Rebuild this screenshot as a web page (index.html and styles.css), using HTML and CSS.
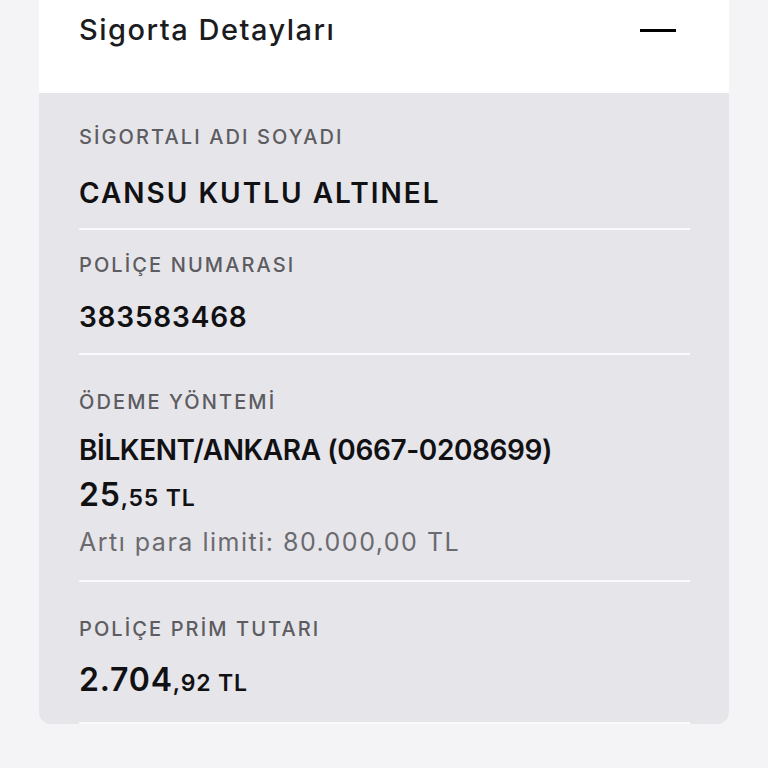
FILE: index.html
```html
<!DOCTYPE HTML>
<html lang="tr">
  <head>
    <title>Sigorta Detayları</title>
    <meta charset="utf-8" />
    <link rel="stylesheet" href="styles.css">
  </head>
  <body>
    <div class="card">
      <div class="card-head">
        <h2 class="card-title">Sigorta Detayları</h2>
        <span class="toggle"></span>
      </div>
      <div class="card-body">
        <div class="row first">
          <div class="label">SİGORTALI ADI SOYADI</div>
          <div class="value wide">CANSU KUTLU ALTINEL</div>
        </div>
        <div class="row second">
          <div class="label">POLİÇE NUMARASI</div>
          <div class="value">383583468</div>
        </div>
        <div class="row">
          <div class="label">ÖDEME YÖNTEMİ</div>
          <div class="value narrow">BİLKENT/ANKARA (0667-0208699)</div>
          <div class="amount">25<small>,55 TL</small></div>
          <div class="note">Artı para limiti: 80.000,00 TL</div>
        </div>
        <div class="row last">
          <div class="label">POLİÇE PRİM TUTARI</div>
          <div class="amount">2.704<small>,92 TL</small></div>
        </div>
      </div>
    </div>
  </body>
</html>
```

FILE: styles.css
```css
*{
  margin:0;
  padding:0;
  box-sizing:border-box;
}
body{
  background:#f4f4f6;
  font-family:Inter, "Noto Sans", sans-serif;
  color:#111113;
}
.card{
  width:690px;
  margin-left:39px;
}
.card-head{
  height:93px;
  background:#fff;
  display:flex;
  justify-content:space-between;
  padding:13px 53px 0 40px;
}
.card-title{
  font-size:29px;
  font-weight:500;
  line-height:34px;
  letter-spacing:1.5px;
  color:#1c1c1f;
}
.toggle{
  width:36px;
  height:3px;
  margin-top:16px;
  background:#000;
}
.card-body{
  background:#e6e5ea;
  border-radius:0 0 12px 12px;
  padding:0 39px 0 40px;
}
.row{
  padding:35px 0 24px;
  border-bottom:2px solid #fafafb;
}
.row.first{
  padding:32px 0 19px;
}
.row.second{
  padding:23px 0 20px;
}
.row.last{
  padding-bottom:20px;
}
.label{
  font-size:20px;
  line-height:24px;
  font-weight:500;
  letter-spacing:2.1px;
  color:#5c5c61;
}
.value{
  margin-top:24px;
  font-size:28px;
  line-height:32px;
  font-weight:600;
  letter-spacing:0.8px;
}
.value.wide{
  margin-top:28px;
  letter-spacing:2px;
}
.value.narrow{
  margin-top:20px;
  letter-spacing:-0.4px;
}
.amount{
  margin-top:12px;
  font-size:32px;
  line-height:34px;
  font-weight:600;
  letter-spacing:0.8px;
}
.amount small{
  font-size:23px;
}
.row.last .amount{
  margin-top:20px;
  line-height:38px;
}
.note{
  margin-top:13px;
  font-size:25px;
  line-height:28px;
  letter-spacing:1.5px;
  color:#6a6a6f;
}
```
